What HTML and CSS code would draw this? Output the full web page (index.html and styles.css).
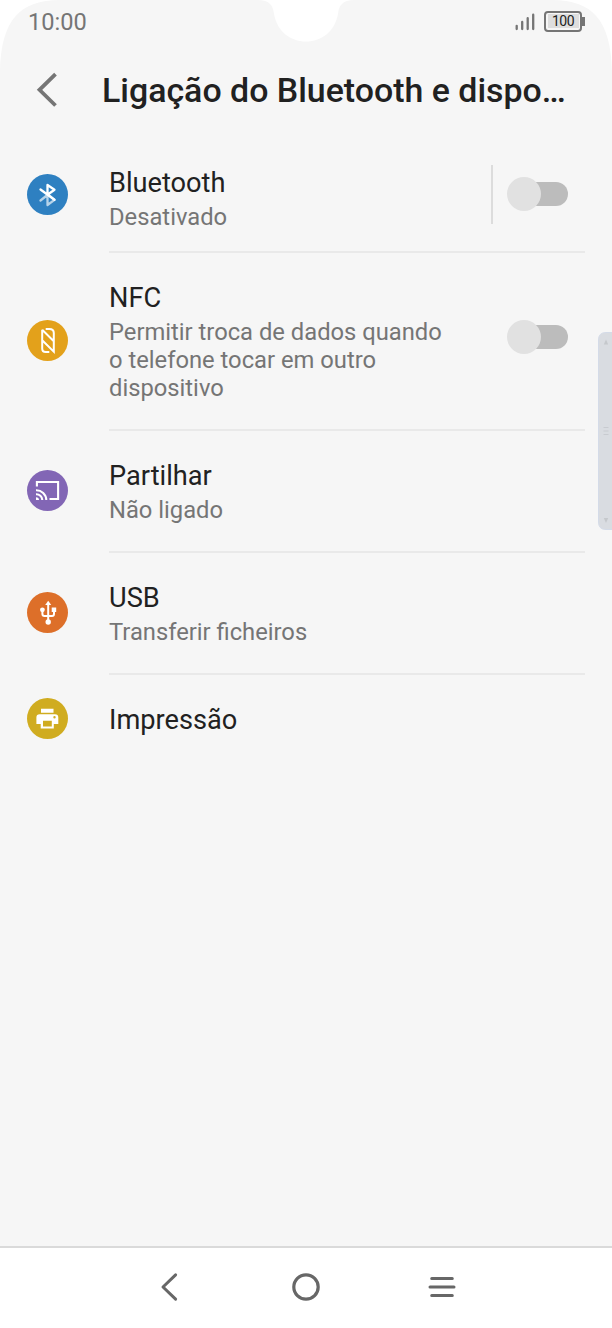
FILE: index.html
```html
<!DOCTYPE html>
<html lang="pt">
<head>
<meta charset="utf-8">
<title>Ligação do Bluetooth e dispositivos</title>
<link rel="stylesheet" href="styles.css">
</head>
<body>
<div class="phone">
  <svg class="cutout" width="612" height="80" viewBox="0 0 612 80" fill="#fff">
    <path d="M0 0H60C20 0 1 20 0 72Z"/>
    <path d="M612 0H552C592 0 611 20 612 72Z"/>
    <path d="M258 0C269 0 273 5 274 14C277 31 290 41.500 306 41.500S335 31 338 14C339 5 343 0 354 0Z"/>
  </svg>
  <header class="status">
    <span class="time">10:00</span>
    <svg class="signal" width="20" height="18" viewBox="0 0 20 18" stroke="#757575" stroke-width="2.300" stroke-linecap="round"><path d="M1.700 12.800V16M7.200 9V16M12.700 5.200V16M18.200 1.700V16"/></svg>
    <span class="battery"><span class="level">100</span></span>
  </header>
  <div class="titlebar">
    <svg width="22" height="36" viewBox="0 0 22 36" fill="none" stroke="#757575" stroke-width="3.800"><path d="M19.500 2.200L3.500 17.800L19.500 33.500"/></svg>
    <h1>Ligação do Bluetooth e dispo…</h1>
  </div>
  <main class="list">
    <section class="row bluetooth">
      <svg class="icon" viewBox="0 0 41 41"><circle cx="20.500" cy="20.500" r="20.500" fill="#2e80c1"/><g fill="none" stroke="#fff" stroke-width="2.300" stroke-linecap="round" stroke-linejoin="round"><path opacity=".65" d="M13.500 26.500L21 20.500L27.500 25.800L20.500 31V20.500"/><path d="M13.500 15.500L27.500 25.800M20.500 20.500V11L27.500 15.700L20.500 20.700"/></g></svg>
      <div class="body"><h2>Bluetooth</h2><p>Desativado</p></div>
      <span class="separator"></span>
      <span class="switch"></span>
    </section>
    <section class="row nfc">
      <svg class="icon" viewBox="0 0 41 41"><circle cx="20.500" cy="20.500" r="20.500" fill="#e3a11b"/><path d="M15.200 9.800V28.500Q15.200 32 18.700 32H22.300M18.700 8.900H22.300Q26.800 8.900 26.800 13V31.600L15.200 20.200M15.200 9.800L26.800 21.200" fill="none" stroke="#fff" stroke-width="2"/></svg>
      <div class="body"><h2>NFC</h2><p>Permitir troca de dados quando<br>o telefone tocar em outro<br>dispositivo</p></div>
      <span class="switch"></span>
    </section>
    <section class="row">
      <svg class="icon" viewBox="0 0 41 41"><circle cx="20.500" cy="20.500" r="20.500" fill="#8266b5"/><g fill="none" stroke="#fff" stroke-width="2.100"><path d="M9.900 16.500V12H31.100V29H22.500M9 20.200A10 10 0 0 1 19.300 30M9 24.200A6 6 0 0 1 15.300 30"/></g><path d="M9 27.200A3 3 0 0 1 12 30H9Z" fill="#fff"/></svg>
      <div class="body"><h2>Partilhar</h2><p>Não ligado</p></div>
    </section>
    <section class="row">
      <svg class="icon" viewBox="0 0 41 41"><circle cx="20.500" cy="20.500" r="20.500" fill="#dd6f29"/><g fill="#fff"><path d="M21.200 8.700L24.200 13H18.200Z"/><circle cx="21.200" cy="30" r="2.700"/><circle cx="15.400" cy="17.800" r="2.400"/><path d="M24.700 15.500H29.200V20H24.700Z"/></g><path d="M21.200 12V29M15.400 18V22Q15.400 24 17.500 24H25Q27 24 27 22V19" fill="none" stroke="#fff" stroke-width="2"/></svg>
      <div class="body"><h2>USB</h2><p>Transferir ficheiros</p></div>
    </section>
    <section class="row print">
      <svg class="icon" viewBox="0 0 41 41"><circle cx="20.500" cy="20.500" r="20.500" fill="#d0ac20"/><path d="M14 10.800H26.500V14.800H14ZM12.700 16.200H28Q31.300 16.200 31.300 19.500V26H26.800V30.500H13.700V26H9.400V19.500Q9.400 16.200 12.700 16.200ZM16 22.800V28.500H24.800V22.800ZM27.500 18A1.200 1.200 0 1 0 27.500 20.400A1.200 1.200 0 1 0 27.500 18Z" fill="#fff" fill-rule="evenodd"/></svg>
      <div class="body"><h2>Impressão</h2></div>
    </section>
  </main>
  <nav class="navbar">
    <svg width="28" height="30" viewBox="0 0 28 30" fill="none" stroke="#676767" stroke-width="3" stroke-linecap="round" stroke-linejoin="round"><path d="M19.600 2.800L7 15L19.600 27.200"/></svg>
    <svg width="28" height="30" viewBox="0 0 28 30" fill="none" stroke="#676767" stroke-width="3.200"><circle cx="14" cy="15" r="12.200"/></svg>
    <svg width="28" height="30" viewBox="0 0 28 30" stroke="#676767" stroke-width="3" stroke-linecap="round"><path d="M3.700 6.400H24.300M2 15H26M3.700 23.600H24.300"/></svg>
  </nav>
  <svg class="edge-handle" width="14" height="198" viewBox="0 0 14 198"><path d="M14 .5H8Q.5 .5 .5 8V190Q.5 197.500 8 197.500H14" fill="#d9dce1" stroke="#d4dbe8"/><path d="M8 7.500L10.200 12.500H5.800ZM8 191L10.200 186H5.800Z" fill="#c5c8cc"/><path d="M5.500 95.500H10.500M5.500 99H10.500M5.500 102.500H10.500" stroke="#c8cbd0"/></svg>
</div>
</body>
</html>
```
FILE: styles.css
```css
* { box-sizing: border-box; }
body { margin: 0; font-family: Roboto, sans-serif; }
h1, h2, p { margin: 0; font-weight: 400; }
svg { display: block; flex: none; }
.phone {
  position: relative;
  width: 612px;
  height: 1328px;
  display: flex;
  flex-direction: column;
  background: #f6f6f6;
  overflow: hidden;
}
.cutout { position: absolute; top: 0; left: 0; }
.status {
  height: 43px;
  padding: 0 28px;
  display: flex;
  align-items: center;
  color: #757575;
}
.time { font-size: 23.600px; margin-right: auto; }
.signal { margin-right: 9px; }
.battery {
  position: relative;
  width: 38px;
  height: 21px;
  margin: -1px 2px 0 0;
  padding: 1.500px;
  border: 2px solid #757575;
  border-radius: 4px;
}
.battery::after {
  content: "";
  position: absolute;
  left: 36px;
  top: 4px;
  width: 3px;
  height: 9px;
  background: #757575;
}
.level {
  display: block;
  height: 14px;
  background: #dedede;
  color: #222;
  font-size: 14px;
  letter-spacing: -.6px;
  line-height: 15px;
  text-align: center;
}
.titlebar {
  height: 94px;
  padding: 0 0 0 36px;
  display: flex;
  align-items: center;
}
h1 {
  margin: 2px 0 0 44px;
  color: #212121;
  font-size: 33.900px;
  font-weight: 500;
  line-height: 44px;
  white-space: nowrap;
}
.list { flex: 1; }
.row {
  position: relative;
  height: 122px;
  padding: 0 44px 0 27px;
  display: flex;
  align-items: center;
}
.row::after {
  content: "";
  position: absolute;
  left: 109px;
  right: 27px;
  bottom: -1px;
  height: 2px;
  background: #e9e9e9;
}
.bluetooth { height: 115px; }
.nfc { height: 178px; }
.print { height: 90px; }
.print::after { display: none; }
.icon { width: 41px; height: 41px; margin: -1px 41px 0 0; }
.bluetooth .icon { margin-top: 0; }
.body { flex: 1; padding-top: 1px; white-space: nowrap; }
.bluetooth .body { padding-top: 7px; }
h2 { color: #212121; font-size: 27.200px; line-height: 36px; }
p { margin-top: 3px; color: #757575; font-size: 23.750px; line-height: 27.900px; }
.separator { width: 2px; height: 59px; margin-right: 14px; background: #dcdcdc; }
.switch {
  position: relative;
  width: 61px;
  height: 34px;
}
.bluetooth .switch { margin-top: -1px; }
.nfc .switch { margin-top: -8px; }
.switch::before {
  content: "";
  position: absolute;
  inset: 5px 0 5px 15px;
  border-radius: 12px;
  background: #bcbcbc;
}
.switch::after {
  content: "";
  position: absolute;
  left: 0;
  top: 0;
  width: 34px;
  height: 34px;
  border-radius: 50%;
  background: #e1e1e1;
}
.navbar {
  height: 82px;
  padding-bottom: 2px;
  border-top: 2px solid #dadada;
  background: #fff;
  display: flex;
  justify-content: center;
  align-items: center;
  gap: 108px;
}
.edge-handle { position: absolute; right: 0; top: 332px; }
```
